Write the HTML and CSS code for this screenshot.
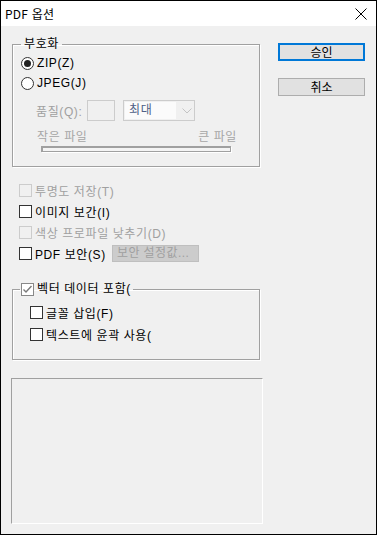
FILE: index.html
```html
<!DOCTYPE html>
<html lang="ko">
<head>
    <meta charset="UTF-8">
    <title>PDF 옵션</title>
    <link rel="stylesheet" href="styles.css">
</head>
<body>

    <div class="window">

        <!-- Title Bar -->
        <div class="titlebar">
            <span class="title">PDF 옵션</span>
            <svg class="close" width="12" height="12" viewBox="0 0 12 12">
                <path d="M0.5 0.5 L11.5 11.5 M11.5 0.5 L0.5 11.5" stroke="#000" stroke-width="1" fill="none"/>
            </svg>
        </div>

        <div class="client">
            <div class="left">

                <!-- Encoding group -->
                <fieldset class="group encoding">
                    <legend>부호화</legend>
                    <div class="radio-row"><span class="radio checked"></span>ZIP(Z)</div>
                    <div class="radio-row"><span class="radio"></span>JPEG(J)</div>

                    <div class="quality-row">
                        <span class="quality-label">품질(Q):</span>
                        <span class="quality-box"></span>
                        <span class="combo">
                            <span class="combo-text">최대</span>
                            <svg class="chevron" width="10" height="6" viewBox="0 0 10 6">
                                <path d="M0.5 0.5 L5 5 L9.5 0.5" stroke="#c4c4c4" fill="none"/>
                            </svg>
                        </span>
                    </div>

                    <div class="size-labels">
                        <span>작은 파일</span>
                        <span>큰 파일</span>
                    </div>
                    <div class="slider-track"></div>
                </fieldset>

                <!-- Options -->
                <div class="options">
                    <div class="check-row disabled"><span class="checkbox"></span>투명도 저장(T)</div>
                    <div class="check-row"><span class="checkbox"></span>이미지 보간(I)</div>
                    <div class="check-row disabled"><span class="checkbox"></span>색상 프로파일 낮추기(D)</div>
                    <div class="check-row">
                        <span class="checkbox"></span>
                        <span class="pdf-label">PDF 보안(S)</span>
                        <span class="btn-disabled">보안 설정값...</span>
                    </div>
                </div>

                <!-- Vector data group -->
                <fieldset class="group vector">
                    <legend>
                        <span class="checkbox checked">
                            <svg width="11" height="11" viewBox="0 0 11 11">
                                <path d="M1.5 5.5 L4 8 L9.5 2" stroke="#7a7a7a" stroke-width="1.4" fill="none"/>
                            </svg>
                        </span>벡터 데이터 포함(
                    </legend>
                    <div class="check-row sub"><span class="checkbox"></span>글꼴 삽입(F)</div>
                    <div class="check-row sub"><span class="checkbox"></span>텍스트에 윤곽 사용(</div>
                </fieldset>

                <div class="preview"></div>
            </div>

            <!-- Dialog buttons -->
            <div class="right">
                <button class="btn default">승인</button>
                <button class="btn">취소</button>
            </div>
        </div>
    </div>

</body>
</html>
```

FILE: styles.css
```css
body {
    margin: 0;
    font-family: "Liberation Sans", "Noto Sans CJK KR", sans-serif;
    font-size: 12px;
    letter-spacing: 0.6px;
    color: #000;
}

.window {
    width: 377px;
    height: 535px;
    box-sizing: border-box;
    border: 1px solid #000;
    background-color: #f0f0f0;
    display: flex;
    flex-direction: column;
}

/* Title Bar */
.titlebar {
    height: 25px;
    background-color: #fff;
    display: flex;
    align-items: center;
    padding-left: 4px;
}

.title {
    font-family: "Noto Sans CJK KR", sans-serif;
    font-size: 12px;
    line-height: 14px;
    letter-spacing: 0.2px;
}

.close {
    margin-left: auto;
    margin-right: 9px;
}

/* Client area */
.client {
    display: flex;
    flex: 1;
}

.left {
    width: 252px;
    padding-left: 11px;
}

.right {
    padding-left: 14px;
    padding-top: 17px;
    display: flex;
    flex-direction: column;
}

/* Group boxes */
.group {
    margin: 0;
    width: 248px;
    box-sizing: border-box;
    border: 1px solid #a0a0a0;
    box-shadow: 1px 1px 0 #fff, inset 1px 1px 0 #fff;
    padding: 0;
    min-inline-size: 0;
}

.group legend {
    line-height: 12px;
    padding: 0 3px;
    margin-left: 8px;
}

.encoding {
    margin-top: 12px;
    padding-top: 3px;
    padding-bottom: 14px;
}

.radio-row {
    height: 20px;
    display: flex;
    align-items: center;
    padding-left: 8px;
}

.radio {
    width: 13px;
    height: 13px;
    box-sizing: border-box;
    border: 1px solid #333;
    border-radius: 50%;
    background-color: #fff;
    margin-right: 3px;
    display: flex;
    align-items: center;
    justify-content: center;
}

.radio.checked::after {
    content: "";
    width: 7px;
    height: 7px;
    border-radius: 50%;
    background-color: #222;
}

/* Quality row (disabled) */
.quality-row {
    margin-top: 7px;
    height: 21px;
    display: flex;
    align-items: center;
    padding-left: 23px;
    color: #a0a0a0;
}

.quality-label {
    width: 51px;
}

.quality-box {
    width: 28px;
    height: 21px;
    box-sizing: border-box;
    border: 1px solid #cccccc;
    background-color: #f0f0f0;
}

.combo {
    margin-left: 8px;
    width: 72px;
    height: 21px;
    box-sizing: border-box;
    border: 1px solid #cccccc;
    background-color: #f0f0f0;
    display: flex;
    align-items: center;
    padding: 1px;
}

.combo-text {
    width: 51px;
    height: 17px;
    background-color: #fbfbfb;
    color: #4d5f86;
    line-height: 17px;
    padding-left: 4px;
    box-sizing: border-box;
}

.chevron {
    margin-left: 6px;
}

.size-labels {
    margin-top: 9px;
    margin-left: 24px;
    width: 200px;
    height: 14px;
    line-height: 14px;
    display: flex;
    justify-content: space-between;
    color: #a6a6a6;
}

.slider-track {
    margin-top: 2px;
    margin-left: 28px;
    width: 190px;
    height: 6px;
    box-sizing: border-box;
    border: 2px solid #a0a0a0;
    border-right-width: 1px;
    border-bottom-width: 1px;
    background-color: #f4f4f4;
    box-shadow: 1px 1px 0 #fff;
}

/* Checkbox rows */
.options {
    margin-top: 13px;
    margin-bottom: 18px;
}

.check-row {
    height: 21px;
    display: flex;
    align-items: center;
    padding-left: 7px;
}

.check-row.disabled {
    color: #a0a0a0;
}

.checkbox {
    width: 13px;
    height: 13px;
    box-sizing: border-box;
    border: 1px solid #333;
    background-color: #fff;
    margin-right: 3px;
    display: inline-flex;
    align-items: center;
    justify-content: center;
    flex-shrink: 0;
}

.check-row.disabled .checkbox {
    border-color: #cccccc;
    background-color: #f0f0f0;
}

.pdf-label {
    width: 77px;
    white-space: nowrap;
}

.btn-disabled {
    width: 87px;
    height: 17px;
    box-sizing: border-box;
    border: 1px solid #bfbfbf;
    background-color: #cccccc;
    color: #a0a0a0;
    line-height: 15px;
    padding-left: 4px;
    letter-spacing: 0.4px;
    white-space: nowrap;
    overflow: hidden;
}

/* Vector group */
.vector {
    padding-top: 5px;
    padding-bottom: 14px;
}

.vector legend {
    display: flex;
    align-items: center;
    line-height: 14px;
    margin-left: 7px;
    padding: 0 2px 0 1px;
}

.vector legend .checkbox {
    border-color: #888;
}

.check-row.sub {
    height: 22px;
    padding-left: 17px;
}

/* Preview area */
.preview {
    margin-top: 18px;
    margin-left: -1px;
    width: 252px;
    height: 146px;
    box-sizing: border-box;
    border: 1px solid #fff;
    border-top-color: #a0a0a0;
    border-left-color: #a0a0a0;
}

/* Dialog buttons */
.btn {
    width: 87px;
    height: 18px;
    box-sizing: border-box;
    border: 1px solid #adadad;
    background-color: #e1e1e1;
    font-family: "Noto Sans CJK KR", sans-serif;
    font-size: 12px;
    line-height: 14px;
    padding: 0;
    color: #000;
}

.btn.default {
    border: 2px solid #0078d7;
    margin-bottom: 17px;
}
```
